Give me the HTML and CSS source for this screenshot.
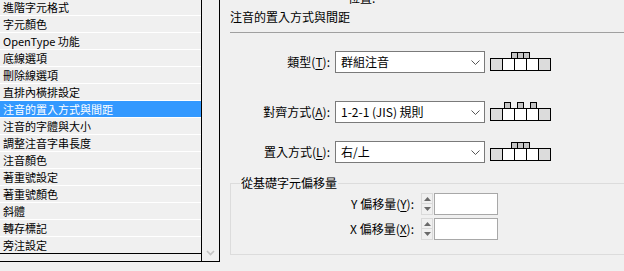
FILE: index.html
```html
<!DOCTYPE html>
<html lang="zh-Hant">
<head>
<meta charset="utf-8">
<title>注音的置入方式與間距</title>
<link rel="stylesheet" href="styles.css">
</head>
<body>
<div class="page">
  <div class="side">
    <div class="list">
      <ul class="items">
        <li>進階字元格式</li>
        <li>字元顏色</li>
        <li>OpenType 功能</li>
        <li>底線選項</li>
        <li>刪除線選項</li>
        <li>直排內橫排設定</li>
        <li class="active">注音的置入方式與間距</li>
        <li>注音的字體與大小</li>
        <li>調整注音字串長度</li>
        <li>注音顏色</li>
        <li>著重號設定</li>
        <li>著重號顏色</li>
        <li>斜體</li>
        <li>轉存標記</li>
        <li>旁注設定</li>
      </ul>
    </div>
    <div class="vscroll">
      <svg width="9" height="6" viewBox="0 0 9 6"><polyline points="1,1 4.5,4.5 8,1" fill="none" stroke="#c4c4c4" stroke-width="1.6"/></svg>
    </div>
  </div>

  <div class="main">
    <div class="cut"><span>位置:</span></div>
    <div class="title">注音的置入方式與間距</div>
    <div class="rule"></div>

    <div class="row r1">
      <label class="lbl">類型(<u>T</u>):</label>
      <div class="combo"><span>群組注音</span><svg width="9" height="5" viewBox="0 0 9 5"><polyline points="0.5,0.5 4.5,4.5 8.5,0.5" fill="none" stroke="#555"/></svg></div>
      <svg class="pic" width="62" height="21" viewBox="0 0 62 21">
        <rect x="21.5" y="1.5" width="6" height="6" fill="#c4c4c4" stroke="#000"/>
        <rect x="27.5" y="1.5" width="6" height="6" fill="#c4c4c4" stroke="#000"/>
        <rect x="33.5" y="1.5" width="6" height="6" fill="#c4c4c4" stroke="#000"/>
        <rect x="0.5" y="7.5" width="12" height="12" fill="#dcdcdc" stroke="#000"/>
        <rect x="12.5" y="7.5" width="12" height="12" fill="#fff" stroke="#000"/>
        <rect x="24.5" y="7.5" width="12" height="12" fill="#fff" stroke="#000"/>
        <rect x="36.5" y="7.5" width="12" height="12" fill="#fff" stroke="#000"/>
        <rect x="48.5" y="7.5" width="12" height="12" fill="#dcdcdc" stroke="#000"/>
      </svg>
    </div>

    <div class="row r2">
      <label class="lbl">對齊方式(<u>A</u>):</label>
      <div class="combo"><span>1-2-1 (JIS) 規則</span><svg width="9" height="5" viewBox="0 0 9 5"><polyline points="0.5,0.5 4.5,4.5 8.5,0.5" fill="none" stroke="#555"/></svg></div>
      <svg class="pic" width="62" height="21" viewBox="0 0 62 21">
        <rect x="14.5" y="1.5" width="6" height="6" fill="#c4c4c4" stroke="#000"/>
        <rect x="27.5" y="1.5" width="6" height="6" fill="#c4c4c4" stroke="#000"/>
        <rect x="40.5" y="1.5" width="6" height="6" fill="#c4c4c4" stroke="#000"/>
        <rect x="0.5" y="7.5" width="12" height="12" fill="#dcdcdc" stroke="#000"/>
        <rect x="12.5" y="7.5" width="12" height="12" fill="#fff" stroke="#000"/>
        <rect x="24.5" y="7.5" width="12" height="12" fill="#fff" stroke="#000"/>
        <rect x="36.5" y="7.5" width="12" height="12" fill="#fff" stroke="#000"/>
        <rect x="48.5" y="7.5" width="12" height="12" fill="#dcdcdc" stroke="#000"/>
      </svg>
    </div>

    <div class="row r3">
      <label class="lbl">置入方式(<u>L</u>):</label>
      <div class="combo"><span>右/上</span><svg width="9" height="5" viewBox="0 0 9 5"><polyline points="0.5,0.5 4.5,4.5 8.5,0.5" fill="none" stroke="#555"/></svg></div>
      <svg class="pic" width="62" height="21" viewBox="0 0 62 21">
        <rect x="21.5" y="1.5" width="6" height="6" fill="#c4c4c4" stroke="#000"/>
        <rect x="27.5" y="1.5" width="6" height="6" fill="#c4c4c4" stroke="#000"/>
        <rect x="33.5" y="1.5" width="6" height="6" fill="#c4c4c4" stroke="#000"/>
        <rect x="0.5" y="7.5" width="12" height="12" fill="#dcdcdc" stroke="#000"/>
        <rect x="12.5" y="7.5" width="12" height="12" fill="#fff" stroke="#000"/>
        <rect x="24.5" y="7.5" width="12" height="12" fill="#fff" stroke="#000"/>
        <rect x="36.5" y="7.5" width="12" height="12" fill="#fff" stroke="#000"/>
        <rect x="48.5" y="7.5" width="12" height="12" fill="#dcdcdc" stroke="#000"/>
      </svg>
    </div>

    <fieldset class="group">
      <legend>從基礎字元偏移量</legend>
      <div class="spinrow s1">
        <label class="slbl">Y 偏移量(<u>Y</u>):</label>
        <div class="spin">
          <div class="btn"><svg width="7" height="4" viewBox="0 0 7 4"><path d="M3.5 0L7 4H0Z" fill="#6a6a6a"/></svg></div>
          <div class="btn"><svg width="7" height="4" viewBox="0 0 7 4"><path d="M0 0H7L3.5 4Z" fill="#6a6a6a"/></svg></div>
        </div>
        <div class="field"></div>
      </div>
      <div class="spinrow s2">
        <label class="slbl">X 偏移量(<u>X</u>):</label>
        <div class="spin">
          <div class="btn"><svg width="7" height="4" viewBox="0 0 7 4"><path d="M3.5 0L7 4H0Z" fill="#6a6a6a"/></svg></div>
          <div class="btn"><svg width="7" height="4" viewBox="0 0 7 4"><path d="M0 0H7L3.5 4Z" fill="#6a6a6a"/></svg></div>
        </div>
        <div class="field"></div>
      </div>
    </fieldset>
  </div>
</div>
</body>
</html>
```

FILE: styles.css
```css
*{ margin:0; padding:0; box-sizing:border-box;}
html,body{ height:100%; overflow:hidden;}
body{ background:#f0f0f0; color:#000; font-family:"Noto Sans CJK TC","Noto Sans",sans-serif; font-size:12px;}
u{ text-decoration:underline; text-underline-offset:2px;}

.page{ display:flex; height:271px;}

/* left list */
.side{ width:220px; height:262px; flex-shrink:0; display:flex; border-right:1px solid #000; border-bottom:1px solid #000;}
.list{ width:202px; border-right:1px solid #000;}
.items{ list-style:none; height:254px; overflow:hidden; border-bottom:1px solid #000;}
.items li{ height:17px; line-height:16px; font-size:11px; padding-left:3px; border-bottom:1px solid #fff; white-space:nowrap;}
.items li:first-child{ margin-top:-1px;}
.items li.active{ background:#3399ff; color:#fff;}
.vscroll{ flex:1; display:flex; align-items:flex-end; justify-content:center; padding-bottom:5px;}
.vscroll svg{ display:block;}

/* right panel */
.main{ flex:1; min-width:0; padding-left:10px;}
.cut{ height:5px; overflow:hidden; padding-left:118px;}
.cut span{ display:block; margin-top:-10px; line-height:16px;}
.title{ margin-top:4px; line-height:16px;}
.rule{ margin-top:7px; border-top:1px solid #a0a0a0;}

.row{ display:flex; align-items:flex-start; height:22px;}
.r1{ margin-top:18px;}
.r2{ margin-top:28px;}
.r3{ margin-top:18px;}
.lbl{ width:100px; text-align:right; line-height:22px; white-space:nowrap;}
.combo{ width:150px; height:22px; margin-left:5px; background:#fff; border:1px solid #7a7a7a; display:flex; align-items:center; justify-content:space-between; padding:0 4px 0 5px; line-height:20px;}
.combo svg{ display:block;}
.pic{ display:block; margin-left:5px;}

/* group runs on past the right edge, so no right border */
.group{ margin-top:12px; border:1px solid #dcdcdc; border-right:0; padding:0 0 14px; min-inline-size:0;}
.group legend{ margin-left:9px; padding:0 1px; line-height:16px;}
.spinrow{ display:flex; height:22px;}
.s1{ margin-top:2px;}
.s2{ margin-top:3px;}
.slbl{ width:183px; text-align:right; line-height:22px; white-space:nowrap;}
.spin{ width:12px; margin-left:7px; display:flex; flex-direction:column;}
.spin .btn{ height:11px; border:1px solid #d9d9d9; display:flex; align-items:center; justify-content:center;}
.spin .btn + .btn{ margin-top:-1px; height:12px;}
.spin svg{ display:block;}
.field{ width:64px; margin-left:1px; background:#fff; border:1px solid #a8a8a8;}
```
